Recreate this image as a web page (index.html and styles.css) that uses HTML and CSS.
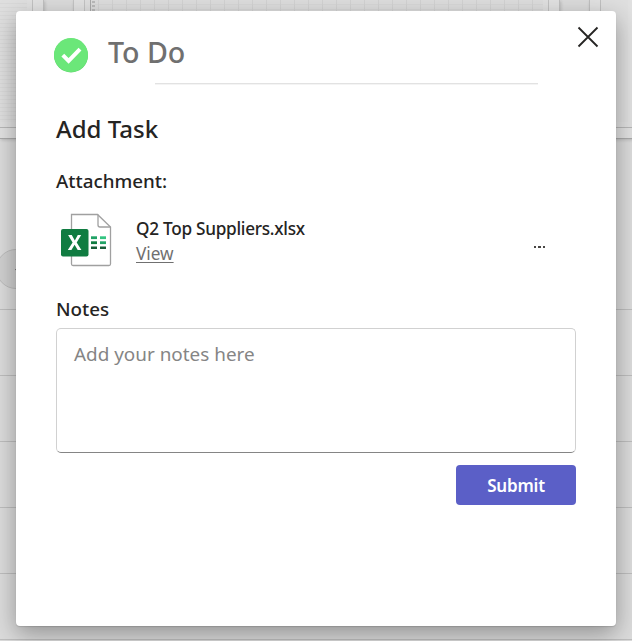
FILE: index.html
```
<!DOCTYPE html>
<html lang="en">
<head>
<meta charset="utf-8">
<title>To Do</title>
<link rel="stylesheet" href="styles.css">
</head>
<body>
<div class="backdrop">
  <div class="cards">
    <div class="card first"><div class="sheet"></div></div>
    <div class="card main"><div class="sheet wide"></div></div>
    <div class="card last"><div class="sheet plain"></div></div>
  </div>
  <div class="filters"><div class="chip"><svg width="8" height="5" viewBox="0 0 8 5"><path d="M0 1h4L2 4z" fill="#555"/></svg></div></div>
  <div class="row"></div><div class="row"></div><div class="row"></div><div class="row"></div><div class="row"></div><div class="row"></div>
</div>
<main class="dialog">
  <header class="header">
    <svg class="logo" width="34" height="36" viewBox="0 0 34 36"><circle cx="17" cy="18.4" r="17" fill="#5bcf68"/><circle cx="17" cy="18" r="17" fill="#6be779"/><path d="M8.8 18.2l5.8 5.8L26 12.2" fill="none" stroke="#fff" stroke-width="4"/></svg>
    <h1 class="title">To Do</h1>
    <svg class="close" width="22" height="22" viewBox="0 0 22 22"><path d="M1.5 1.5l19 19M20.5 1.5l-19 19" stroke="#252423" stroke-width="1.8"/></svg>
  </header>
  <hr class="divider">
  <h2 class="heading">Add Task</h2>
  <h3 class="label attachment-label">Attachment:</h3>
  <section class="file">
    <svg class="excel" width="52" height="55" viewBox="0 0 52 55">
      <path d="M11.5 2.5h26L50.5 15v37q0 1.5-1.5 1.5H13q-1.5 0-1.5-1.5z" fill="#fff" stroke="#a0a0a0" stroke-width="1.3"/>
      <path d="M38 2.5V13q0 2 2 2h10.5" fill="none" stroke="#a0a0a0" stroke-width="1.3"/>
      <rect x="1" y="17" width="27.5" height="27.5" rx="2" fill="#107c41"/>
      <path d="M8.1 23h3.7l3 5.5 3-5.5h3.4l-4.5 7.5 4.7 7.5h-3.7l-3.1-5.3-3.2 5.3H7.8l4.8-7.5z" fill="#fff"/>
      <path d="M31 25.7h6" stroke="#21a366" stroke-width="2.8"/><path d="M40 25.7h6" stroke="#33c481" stroke-width="2.8"/>
      <path d="M31 30.7h6" stroke="#107c41" stroke-width="2.8"/><path d="M40 30.7h6" stroke="#21a366" stroke-width="2.8"/>
      <path d="M31 35.8h15" stroke="#185c37" stroke-width="2.5" stroke-dasharray="6 3"/>
    </svg>
    <div class="details"><span class="name">Q2 Top Suppliers.xlsx</span><a class="view">View</a></div>
    <div class="more"><i></i><i></i><i></i></div>
  </section>
  <h3 class="label notes-label">Notes</h3>
  <div class="notes"><span class="placeholder">Add your notes here</span></div>
  <button class="submit"><span>Submit</span></button>
</main>
</body>
</html>
```
FILE: styles.css
```
* { box-sizing: border-box; }
body { margin: 0; width: 632px; height: 641px; overflow: hidden; position: relative; background: #dcdcdc; color: #252423; font-family: "Noto Sans", "Open Sans", sans-serif; }
.backdrop { height: 641px; overflow: hidden; }
.cards { display: flex; gap: 29px; height: 139px; }
.card { flex: none; border-right: 1px solid #c0c0c0; border-bottom: 1px solid #aaa; background: #e2e2e2; box-shadow: 1px 1px 3px rgba(0,0,0,.16); padding-bottom: 10px; }
.first { width: 44px; padding-right: 10px; }
.main { width: 487px; padding-left: 10px; padding-right: 10px; border-left: 1px solid #c4c4c4; }
.last { width: 44px; padding-left: 10px; border-left: 1px solid #c0c0c0; border-right: 0; }
.sheet { height: 128px; border-right: 1px solid #c2c2c2; border-bottom: 1px solid #b8b8b8; background: repeating-linear-gradient(#dfdfdf 0 3px, #d9d9d9 3px 4px); box-shadow: inset -5px -5px #e1e1e1; }
.wide { border-left: 1px solid #c4c4c4; background: linear-gradient(90deg, #e0e0e0 6px, transparent 6px), repeating-linear-gradient(90deg, transparent 0 13px, #d3d3d3 13px 14px), repeating-linear-gradient(#dedede 0 4px, #d8d8d8 4px 5px); }
.wide::before { content: ""; display: block; width: 9px; height: 11px; border-left: 1px solid #aaa; margin-left: 5px; background: repeating-linear-gradient(#ddd 0 1px, #bbb 1px 3px, #ddd 3px 4px) 1px 0 / 3px 11px no-repeat; }
.plain { background: #dfdfdf; border-right: 0; border-left: 1px solid #c0c0c0; }
.filters { height: 170px; padding-top: 110px; }
.chip { width: 40px; height: 40px; margin-left: -4px; border: 1px solid #bcbcbc; border-radius: 50%; background: #d0d0d0; padding: 17px 0 0 18px; line-height: 0; }
.row { height: 66px; border-top: 1px solid #bebebe; }
.dialog { position: absolute; left: 16px; top: 11px; width: 600px; height: 615px; padding: 0 40px; border-radius: 4px; background: #fff; box-shadow: 0 1px 1px rgba(0,0,0,.12), 0 8px 24px rgba(0,0,0,.34); }
.header { display: flex; height: 72px; margin: 0 -25px 0 -2px; }
.logo { margin-top: 26px; }
.title { margin: 21px 0 0 20px; font-size: 28.6px; line-height: 40px; font-weight: 500; color: #707070; white-space: nowrap; }
.close { margin: 15px 2px 0 auto; }
.divider { width: 383px; height: 1px; margin: 0 0 0 99px; border: 0; background: #e2e2e2; box-shadow: 0 1px #f4f4f4; }
.heading { margin: 27px 0 0; font-size: 24px; line-height: 36px; font-weight: 500; }
.label { font-size: 18.8px; line-height: 26px; font-weight: 500; }
.attachment-label { margin: 21px 0 0; }
.file { display: flex; height: 55px; margin: 18px 0 0 4px; }
.details { display: flex; flex-direction: column; margin: 4px 0 0 24px; line-height: 25px; }
.name { font-size: 17.2px; letter-spacing: -.27px; font-weight: 500; white-space: nowrap; }
.view { align-self: flex-start; font-size: 17.2px; color: #707070; text-decoration: underline; text-decoration-thickness: 1px; text-underline-offset: 2px; }
.more { display: flex; gap: 2px; margin: 34px 31px 0 auto; }
.more i { width: 2.4px; height: 2px; background: #484644; }
.notes-label { margin: 29px 0 0; }
.notes { height: 125px; margin-top: 6px; padding: 11px 17px; border: 1px solid #d1d1d1; border-bottom-color: #858585; border-radius: 5px; }
.placeholder { display: inline-block; font-size: 18.9px; line-height: 28px; color: #858585; white-space: nowrap; }
.submit { display: block; width: 120px; height: 40px; margin: 12px 0 0 auto; padding: 1px 0 0; border: 0; border-radius: 4px; background: #5b5fc7; color: #fff; font: 600 17px/39px "Noto Sans", "Open Sans", sans-serif; letter-spacing: -.2px; }
```
